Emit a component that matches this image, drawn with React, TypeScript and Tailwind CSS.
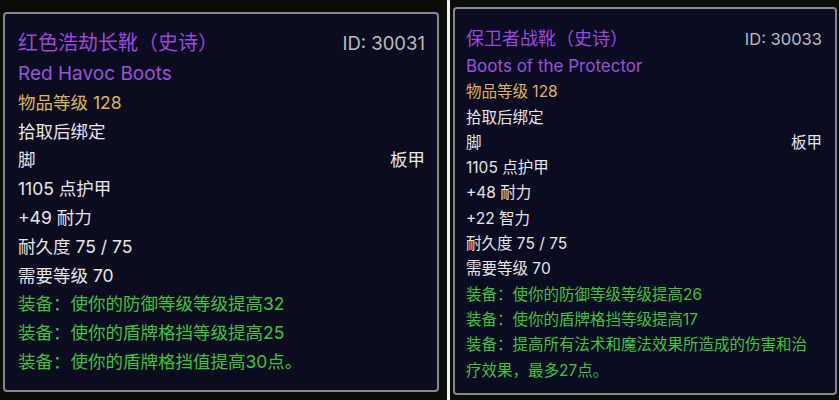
import React from "react";

type Line = { text: string; right?: string; color: string };

const W = "text-[#e6e6e6]";
const Y = "text-[#dfb356]";
const G = "text-[#3dc33a]";

function Panel(props: {
  title: string;
  id: string;
  en: string;
  lines: Line[];
  big: boolean;
}) {
  const { big } = props;
  const titleCls = big
    ? "text-[20px] leading-[34px]"
    : "text-[18px] leading-[30px]";
  const idCls = big ? "text-[18.5px]" : "text-[16.5px]";
  const enCls = big
    ? "text-[19px] leading-[28.8px]"
    : "text-[17px] leading-[25.3px]";
  const bodyCls = big
    ? "text-[17.5px] leading-[28.8px]"
    : "text-[15.5px] leading-[25.3px]";
  return (
    <div className="flex flex-col">
      <div className={`flex justify-between items-center ${titleCls}`}>
        <span className="text-[#9b47dc]">{props.title}</span>
        <span className={`text-[#bcbcbc] ${idCls}`}>{props.id}</span>
      </div>
      <div className={`text-[#9a52dc] ${enCls}`}>{props.en}</div>
      {props.lines.map((l, i) => (
        <div key={i} className={`flex justify-between ${bodyCls} ${l.color}`}>
          <span>{l.text}</span>
          {l.right ? <span>{l.right}</span> : null}
        </div>
      ))}
    </div>
  );
}

export default function App() {
  const leftLines: Line[] = [
    { text: "物品等级 128", color: Y },
    { text: "拾取后绑定", color: W },
    { text: "脚", right: "板甲", color: W },
    { text: "1105 点护甲", color: W },
    { text: "+49 耐力", color: W },
    { text: "耐久度 75 / 75", color: W },
    { text: "需要等级 70", color: W },
    { text: "装备：使你的防御等级等级提高32", color: G },
    { text: "装备：使你的盾牌格挡等级提高25", color: G },
    { text: "装备：使你的盾牌格挡值提高30点。", color: G },
  ];
  const rightLines: Line[] = [
    { text: "物品等级 128", color: Y },
    { text: "拾取后绑定", color: W },
    { text: "脚", right: "板甲", color: W },
    { text: "1105 点护甲", color: W },
    { text: "+48 耐力", color: W },
    { text: "+22 智力", color: W },
    { text: "耐久度 75 / 75", color: W },
    { text: "需要等级 70", color: W },
    { text: "装备：使你的防御等级等级提高26", color: G },
    { text: "装备：使你的盾牌格挡等级提高17", color: G },
    { text: "装备：提高所有法术和魔法效果所造成的伤害和治", color: G },
    { text: "疗效果，最多27点。", color: G },
  ];
  return (
    <div className="flex w-[839px] h-[400px] overflow-hidden bg-[#0b0d09] font-['Inter','Noto_Sans_CJK_SC',sans-serif]">
      <div className="w-[447px] h-full bg-[#0b0d09] pl-[3px] pt-[12px]">
        <div className="w-[436px] h-[380px] border-2 border-[#858988] rounded-[4px] bg-[#0b0c20] pl-[13px] pr-[12px] pt-[12px]">
          <Panel
            big
            title="红色浩劫长靴（史诗）"
            id="ID: 30031"
            en="Red Havoc Boots"
            lines={leftLines}
          />
        </div>
      </div>
      <div className="w-[3px] h-full bg-[#f2f2f2]" />
      <div className="flex-1 h-full bg-[#0b0d09] pl-[3px] pt-[7px]">
        <div className="w-[384px] h-[388px] border-2 border-[#858988] rounded-[4px] bg-[#0a0c22] pl-[11px] pr-[13px] pt-[15px]">
          <Panel
            big={false}
            title="保卫者战靴（史诗）"
            id="ID: 30033"
            en="Boots of the Protector"
            lines={rightLines}
          />
        </div>
      </div>
    </div>
  );
}
